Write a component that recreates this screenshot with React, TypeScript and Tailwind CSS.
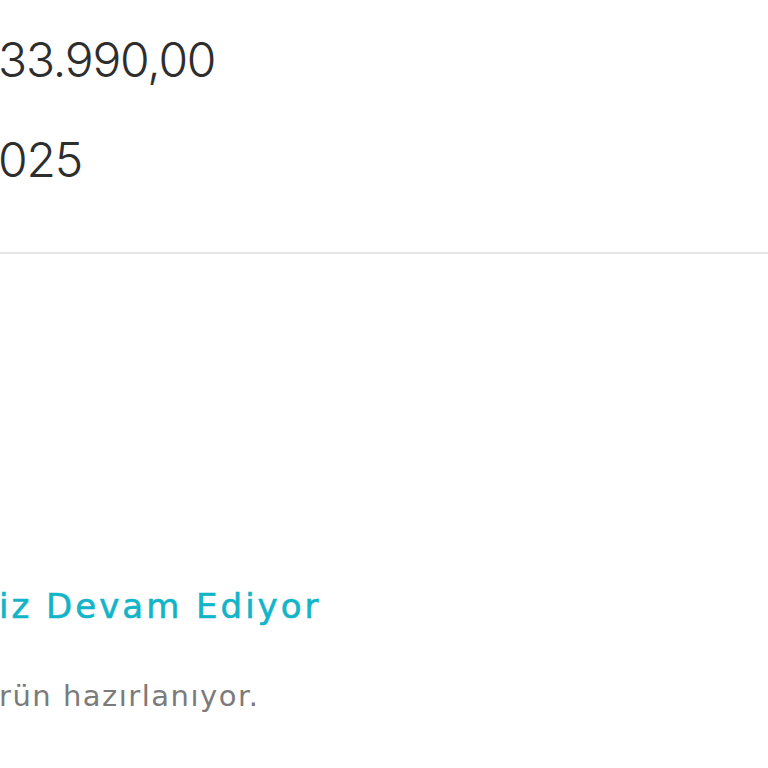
import React from "react";

export default function App() {
  return (
    <div
      className="w-[768px] h-[768px] bg-white overflow-hidden flex flex-col"
      style={{ fontFamily: "Inter, 'Open Sans', sans-serif" }}
    >
      <div className="flex flex-col pt-[30px] gap-[40px] text-[48px] leading-[60px] font-light text-[#2e2e2e] tracking-[-1.2px] -ml-[2px]">
        <span>33.990,00</span>
        <span>025</span>
      </div>
      <div className="mt-[62px] h-[2px] bg-[#e5e5e5] w-full" />
      <div
        className="flex flex-col mt-[330px] -ml-[1px]"
        style={{ fontFamily: "'DejaVu Sans', Inter, sans-serif" }}
      >
        <span className="text-[34px] leading-[44px] tracking-[3px] text-[#12b5c8] [-webkit-text-stroke:0.6px_#12b5c8]">iz Devam Ediyor</span>
        <span className="mt-[50px] text-[29px] leading-[36px] tracking-[1.5px] text-[#7b7b7b]">rün hazırlanıyor.</span>
      </div>
    </div>
  );
}
